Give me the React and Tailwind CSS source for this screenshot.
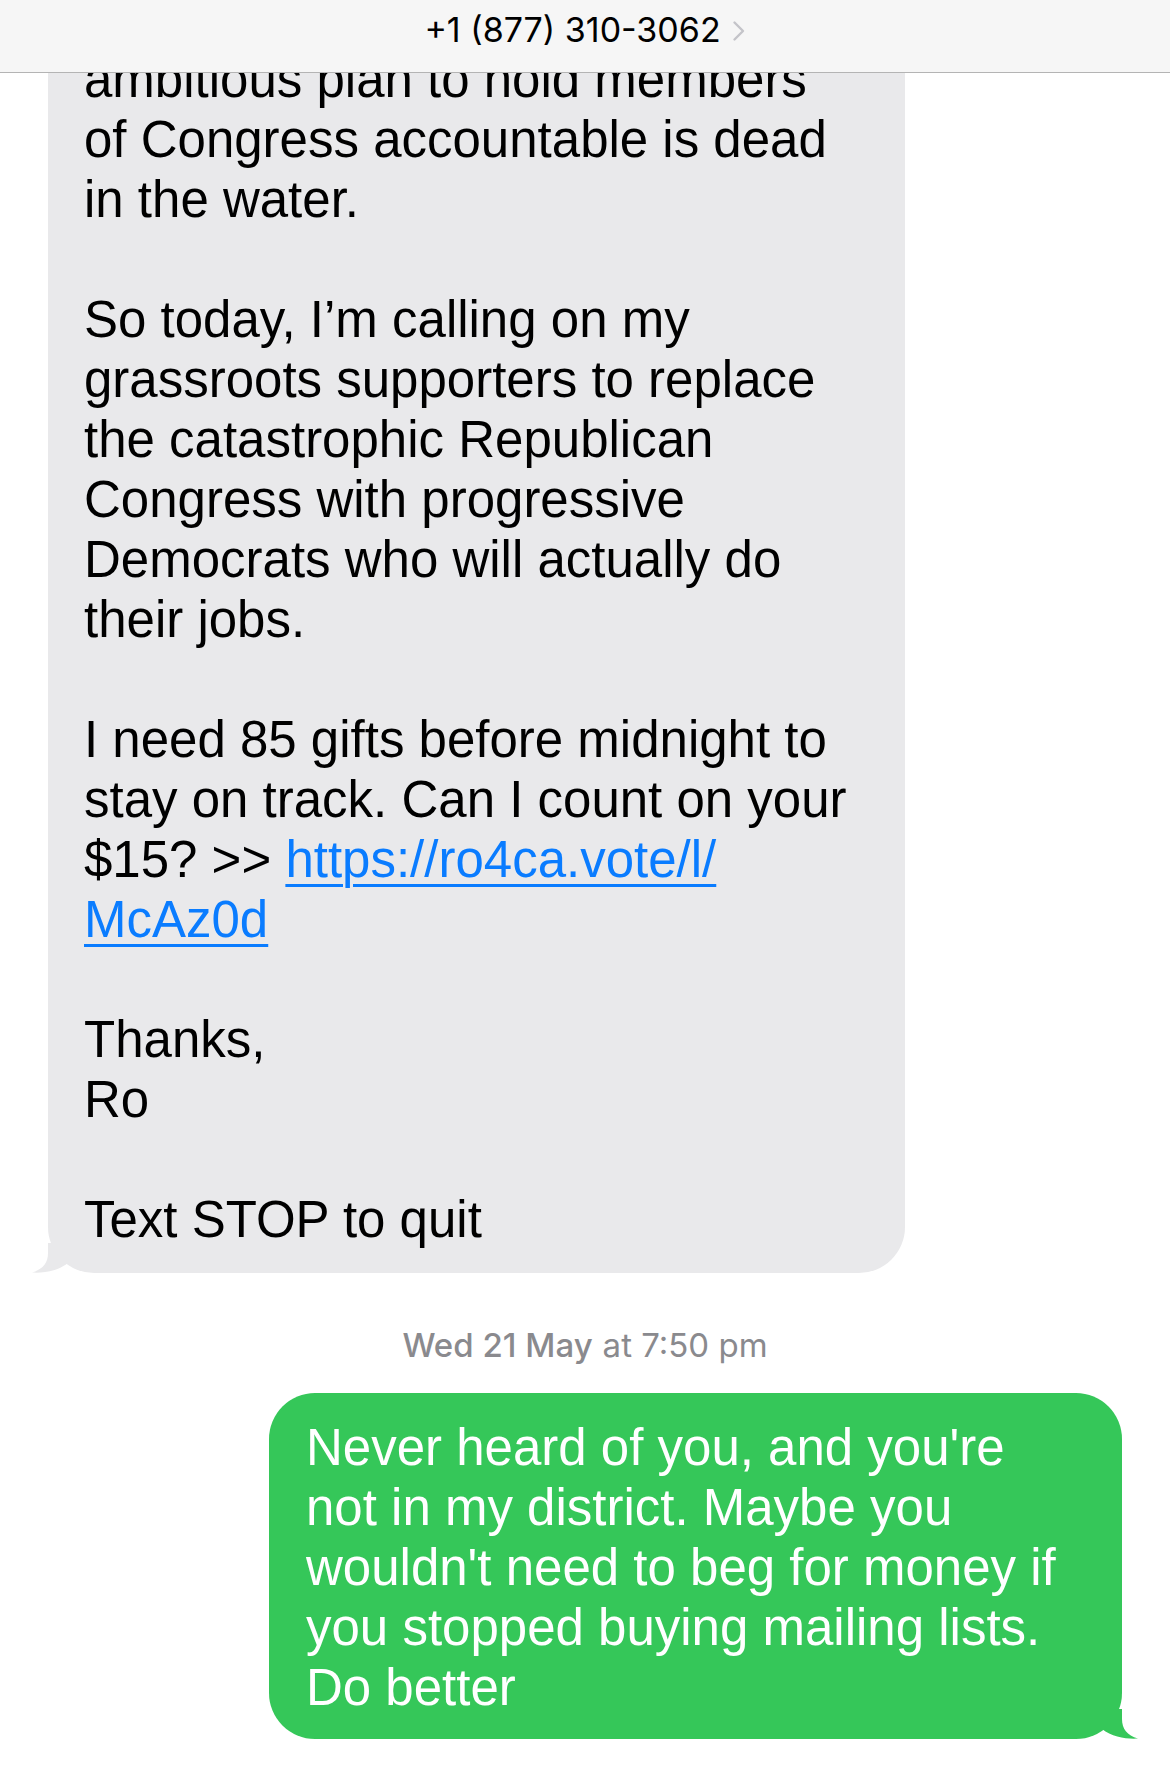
import React from 'react';

const incoming = [
  'ambitious plan to hold members',
  'of Congress accountable is dead',
  'in the water.',
  '',
  'So today, I’m calling on my',
  'grassroots supporters to replace',
  'the catastrophic Republican',
  'Congress with progressive',
  'Democrats who will actually do',
  'their jobs.',
  '',
  'I need 85 gifts before midnight to',
  'stay on track. Can I count on your',
  'LINK1',
  'LINK2',
  '',
  'Thanks,',
  'Ro',
  '',
  'Text STOP to quit',
];

const outgoing = [
  'Never heard of you, and you\'re',
  'not in my district. Maybe you',
  'wouldn\'t need to beg for money if',
  'you stopped buying mailing lists.',
  'Do better',
];

function Line({ text }) {
  if (text === '') return <div className="h-[60px]" />;
  if (text === 'LINK1') {
    return (
      <div className="h-[60px] whitespace-nowrap">
        $15? &gt;&gt;{' '}
        <a className="text-[#0a7cff] underline decoration-[3px] underline-offset-[7px]">https://ro4ca.vote/l/</a>
      </div>
    );
  }
  if (text === 'LINK2') {
    return (
      <div className="h-[60px] whitespace-nowrap">
        <a className="text-[#0a7cff] underline decoration-[3px] underline-offset-[7px]">McAz0d</a>
      </div>
    );
  }
  return <div className="h-[60px] whitespace-nowrap">{text}</div>;
}

// tail drawn at the bottom corner of a bubble; mirrored for outgoing messages
function Tail({ color, flip }) {
  return (
    <svg
      width="40"
      height="30"
      viewBox="0 0 40 30"
      className={flip ? 'absolute right-[-17px] bottom-0 -scale-x-100' : 'absolute left-[-17px] bottom-0'}
    >
      <path d="M17 0 L17 10 C17 20 12 26 1 29.6 C12 30.4 27 28 37 20 L37 0 Z" fill={color} />
    </svg>
  );
}

export default function App() {
  return (
    <div
      className="relative w-[1170px] h-[1773px] overflow-hidden bg-white"
      style={{ fontFamily: '"Liberation Sans", Arial, sans-serif' }}
    >
      {/* nav bar overlays the scrolled thread */}
      <div className="absolute top-0 inset-x-0 z-10 h-[73px] bg-[#f6f6f6] border-b border-[#b4b4b4] flex items-start justify-center pt-[9px]">
        <div className="flex items-center gap-[11px]">
          <span className="font-['Inter',sans-serif] text-[34px] leading-[42px] text-black">+1 (877) 310-3062</span>
          <svg width="14" height="22" viewBox="0 0 14 22" className="mt-[2px]">
            <path d="M2.5 2.5 L11 11 L2.5 19.5" fill="none" stroke="#c4c4c9" strokeWidth="2.4" strokeLinecap="round" strokeLinejoin="round" />
          </svg>
        </div>
      </div>

      <div className="flex flex-col">
        <div className="pl-[48px]">
          <div className="relative w-[857px] bg-[#e9e9eb] rounded-[46px] pt-[50px] pb-[23px] pl-[36px] text-[51px] leading-[60px] text-black">
            {incoming.map((t, i) => (
              <Line key={i} text={t} />
            ))}
            <Tail color="#e9e9eb" />
          </div>
        </div>

        <div className="mt-[53px] h-[40px] flex justify-center items-center font-['Inter',sans-serif] text-[33px] text-[#8a8a8e]">
          <span className="font-medium">Wed 21 May</span>
          <span className="ml-[10px]">at 7:50 pm</span>
        </div>

        <div className="mt-[27px] flex justify-end pr-[48px]">
          <div className="relative w-[853px] bg-[#35c759] rounded-[46px] pt-[25px] pb-[21px] pl-[37px] text-[51px] leading-[60px] text-white">
            {outgoing.map((t, i) => (
              <div key={i} className="h-[60px] whitespace-nowrap">{t}</div>
            ))}
            <Tail color="#35c759" flip />
          </div>
        </div>
      </div>
    </div>
  );
}
